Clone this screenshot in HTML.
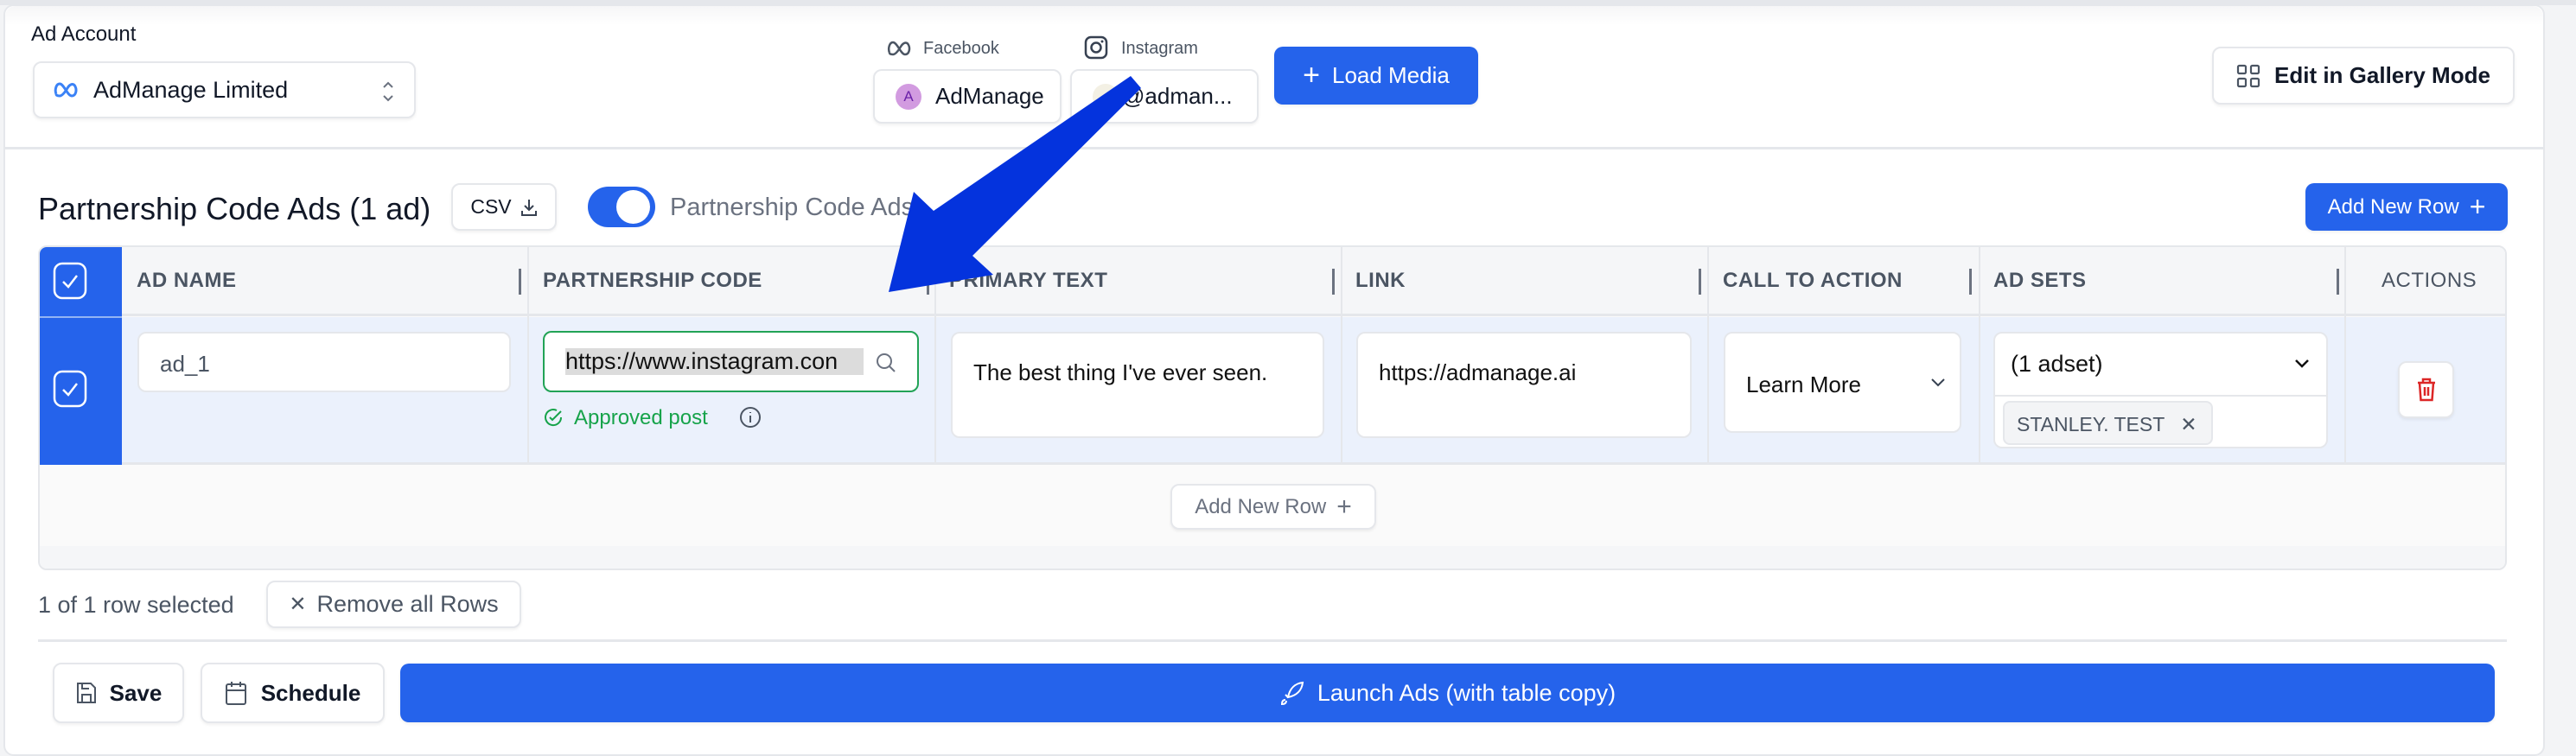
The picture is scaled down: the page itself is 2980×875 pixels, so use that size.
<!DOCTYPE html>
<html><head><meta charset="utf-8"><style>
*{box-sizing:border-box;margin:0;padding:0}
body{width:2980px;height:862px;position:relative;background:#f3f4f6;font-family:"Liberation Sans",sans-serif;overflow:hidden;color:#111827}
.a{position:absolute}
.btn{position:absolute;background:#fff;border:2px solid #e5e7eb;border-radius:10px;box-shadow:0 2px 3px rgba(0,0,0,.06);display:flex;align-items:center;font-size:26px}
.blue{background:#2563eb;color:#fff;border:none;border-radius:10px}
.hd{position:absolute;top:284px;height:81px;display:flex;align-items:center;font-size:24px;font-weight:bold;color:#4b5563;letter-spacing:.5px}
.sep{position:absolute;top:311px;width:3px;height:30px;background:#6b7280}
.vl{position:absolute;top:284px;height:253px;width:2px;background:#e5e7eb}
.inp{position:absolute;background:#fff;border:2px solid #e5e7eb;border-radius:10px;font-size:26px;color:#111}
</style></head><body>
<div class="a" style="left:0;top:0;width:2980px;height:6px;background:#e5e7eb"></div>
<div class="a" style="left:4px;top:5px;width:2940px;height:870px;background:#fff;border:2px solid #e5e7eb;border-radius:12px"></div>
<div class="a" style="left:6px;top:7px;width:2936px;height:22px;background:linear-gradient(#f6f6f7,#fff);border-radius:12px 12px 0 0"></div>
<div class="a" style="left:36px;top:26px;font-size:24px">Ad Account</div>
<div class="btn" style="left:38px;top:71px;width:443px;height:66px;padding-left:22px">
<svg width="30" height="20" viewBox="0 0 30 20"><path d="M3 15C1 10 3 3 7 3c5 0 9 14 14 14 5 0 6-7 4-11-2-4-6-3-9 2-3 5-6 9-9 9-3 0-4-1-4-2" fill="none" stroke="#3b82f6" stroke-width="3"/></svg>
<span style="margin-left:16px;font-size:27px">AdManage Limited</span>
<svg class="a" style="left:402px;top:20px" width="14" height="26" viewBox="0 0 14 26"><path d="M2 8 7 3l5 5M2 18l5 5 5-5" fill="none" stroke="#6b7280" stroke-width="2"/></svg></div>
<svg class="a" style="left:1026px;top:46px" width="30" height="20" viewBox="0 0 30 20"><path d="M3 15C1 10 3 3 7 3c5 0 9 14 14 14 5 0 6-7 4-11-2-4-6-3-9 2-3 5-6 9-9 9-3 0-4-1-4-2" fill="none" stroke="#4b5563" stroke-width="2.5"/></svg>
<div class="a" style="left:1068px;top:45px;font-size:20px;color:#4b5563">Facebook</div>
<svg class="a" style="left:1253px;top:40px" width="30" height="30" viewBox="0 0 30 30"><rect x="3" y="3" width="24" height="24" rx="6" fill="none" stroke="#374151" stroke-width="2.5"/><circle cx="15" cy="15" r="5.5" fill="none" stroke="#374151" stroke-width="2.5"/><circle cx="22" cy="8" r="1.5" fill="#374151"/></svg>
<div class="a" style="left:1297px;top:45px;font-size:20px;color:#4b5563">Instagram</div>
<div class="btn" style="left:1010px;top:80px;width:218px;height:63px;padding-left:24px"><span style="width:30px;height:30px;border-radius:50%;background:#d29be0;color:#6b21a8;font-size:17px;display:flex;align-items:center;justify-content:center">A</span><span style="margin-left:16px">AdManage</span></div>
<div class="btn" style="left:1238px;top:80px;width:218px;height:63px;padding-left:24px"><span style="width:30px;height:30px;border-radius:50%;background:#f3f0e4"></span><span style="margin-left:4px">@adman...</span></div>
<div class="btn blue" style="left:1474px;top:54px;width:236px;height:67px;justify-content:center;font-size:26px"><span style="font-size:34px;margin-right:14px;font-weight:300">+</span>Load Media</div>
<div class="btn" style="left:2559px;top:54px;width:350px;height:67px;padding-left:26px;font-weight:bold"><svg width="28" height="28" viewBox="0 0 28 28" fill="none" stroke="#4b5563" stroke-width="2.2"><rect x="2" y="2" width="9" height="9" rx="1.5"/><rect x="17" y="2" width="9" height="9" rx="1.5"/><rect x="2" y="17" width="9" height="9" rx="1.5"/><rect x="17" y="17" width="9" height="9" rx="1.5"/></svg><span style="margin-left:16px">Edit in Gallery Mode</span></div>
<div class="a" style="left:6px;top:170px;width:2936px;height:3px;background:#e5e7eb"></div>
<div class="a" style="left:44px;top:221px;font-size:36px">Partnership Code Ads (1 ad)</div>
<div class="btn" style="left:522px;top:212px;width:122px;height:55px;justify-content:center;font-size:23px">CSV <svg style="margin-left:10px" width="20" height="22" viewBox="0 0 20 22" fill="none" stroke="#374151" stroke-width="2"><path d="M10 2v12M5 9l5 5 5-5M2 15v5h16v-5"/></svg></div>
<div class="a" style="left:680px;top:216px;width:78px;height:47px;border-radius:24px;background:#2563eb"><div class="a" style="left:33px;top:4px;width:39px;height:39px;border-radius:50%;background:#fff"></div></div>
<div class="a" style="left:775px;top:224px;font-size:29px;color:#6b7280">Partnership Code Ads</div>
<div class="btn blue" style="left:2667px;top:212px;width:234px;height:55px;justify-content:center;font-size:24px">Add New Row <span style="font-size:32px;margin-left:12px;font-weight:300">+</span></div>
<div class="a" style="left:44px;top:284px;width:2856px;height:376px;border:2px solid #e5e7eb;border-radius:10px;background:#fafafa;overflow:hidden">
<div class="a" style="left:0;top:0;width:2856px;height:80px;background:#f5f6f8;border-bottom:3px solid #e5e7eb"></div>
<div class="a" style="left:0;top:81px;width:2856px;height:171px;background:#ebf1fc;border-bottom:3px solid #e5e7eb"></div>
<div class="a" style="left:0;top:0;width:95px;height:252px;background:#2563eb"></div>
<div class="a" style="left:0;top:80px;width:95px;height:2px;background:#93b4f4"></div>
<div class="a" style="left:0;top:272px;width:2856px;height:80px;background:#fafafa"></div>
<div class="a" style="left:0;top:346px;width:2856px;height:30px;background:#f5f6f8"></div>
</div>
<svg class="a" style="left:61px;top:303px" width="40" height="44" viewBox="0 0 40 44"><rect x="2" y="2" width="36" height="40" rx="9" fill="none" stroke="#fff" stroke-width="2.5"/><path d="M12 23l6 6 10-13" fill="none" stroke="#fff" stroke-width="2.5"/></svg>
<svg class="a" style="left:61px;top:428px" width="40" height="44" viewBox="0 0 40 44"><rect x="2" y="2" width="36" height="40" rx="9" fill="none" stroke="#fff" stroke-width="2.5"/><path d="M12 23l6 6 10-13" fill="none" stroke="#fff" stroke-width="2.5"/></svg>
<div class="vl" style="left:610px"></div><div class="vl" style="left:1081px"></div><div class="vl" style="left:1551px"></div><div class="vl" style="left:1975px"></div><div class="vl" style="left:2289px"></div><div class="vl" style="left:2712px"></div>
<div class="hd" style="left:158px">AD NAME</div>
<div class="hd" style="left:628px">PARTNERSHIP CODE</div>
<div class="hd" style="left:1098px">PRIMARY TEXT</div>
<div class="hd" style="left:1568px">LINK</div>
<div class="hd" style="left:1993px">CALL TO ACTION</div>
<div class="hd" style="left:2306px">AD SETS</div>
<div class="hd" style="left:2755px;font-weight:normal">ACTIONS</div>
<div class="sep" style="left:600px"></div><div class="sep" style="left:1072px"></div><div class="sep" style="left:1541px"></div><div class="sep" style="left:1965px"></div><div class="sep" style="left:2278px"></div><div class="sep" style="left:2703px"></div>
<div class="inp" style="left:159px;top:384px;width:432px;height:70px;padding:20px 24px;color:#4b5563">ad_1</div>
<div class="inp" style="left:628px;top:383px;width:435px;height:71px;border-color:#22a356;padding:18px 24px;overflow:hidden"><span style="background:#dcdcdc;display:inline-block;width:345px;overflow:hidden;white-space:nowrap;font-size:27px">https://www.instagram.con</span>
<svg class="a" style="left:382px;top:22px" width="26" height="26" viewBox="0 0 26 26" fill="none" stroke="#6b7280" stroke-width="2"><circle cx="11" cy="11" r="8"/><path d="M17 17l6 6"/></svg></div>
<svg class="a" style="left:628px;top:471px" width="24" height="24" viewBox="0 0 24 24" fill="none" stroke="#16a34a" stroke-width="2"><path d="M21 12a9 9 0 1 1-5-8"/><path d="M8 12l3 3 10-10"/></svg>
<div class="a" style="left:664px;top:470px;font-size:24px;color:#16a34a">Approved post</div>
<svg class="a" style="left:855px;top:470px" width="26" height="26" viewBox="0 0 26 26" fill="none" stroke="#4b5563" stroke-width="2"><circle cx="13" cy="13" r="11"/><path d="M13 11v8M13 7v1"/></svg>
<div class="inp" style="left:1100px;top:384px;width:432px;height:123px;padding:30px 24px">The best thing I've ever seen.</div>
<div class="inp" style="left:1569px;top:384px;width:388px;height:123px;padding:30px 24px">https://admanage.ai</div>
<div class="inp" style="left:1994px;top:384px;width:275px;height:117px;padding:44px 24px">Learn More<svg class="a" style="left:236px;top:50px" width="20" height="14" viewBox="0 0 20 14"><path d="M3 3l7 7 7-7" fill="none" stroke="#374151" stroke-width="2"/></svg></div>
<div class="inp" style="left:2306px;top:384px;width:387px;height:135px;overflow:hidden"><div style="padding:20px 18px;height:73px;border-bottom:2px solid #e5e7eb;font-size:27px">(1 adset)</div>
<svg class="a" style="left:345px;top:28px" width="20" height="14" viewBox="0 0 20 14"><path d="M3 3l7 7 7-7" fill="none" stroke="#111" stroke-width="2.5"/></svg>
<div class="a" style="left:9px;top:78px;width:243px;height:51px;background:#f3f4f6;border:2px solid #e5e7eb;border-radius:8px;padding:12px 14px;font-size:23px;color:#4b5563">STANLEY. TEST <span style="margin-left:12px">✕</span></div></div>
<div class="btn" style="left:2774px;top:418px;width:65px;height:66px;justify-content:center"><svg width="26" height="30" viewBox="0 0 26 30" fill="none" stroke="#dc2626" stroke-width="2.5"><path d="M3 7h20M9 7V3h8v4M5 7l1.5 20h13L21 7M11 12v10M15 12v10"/></svg></div>
<div class="btn" style="left:1354px;top:560px;width:238px;height:53px;justify-content:center;font-size:24px;color:#6b7280">Add New Row <span style="font-size:30px;margin-left:12px;font-weight:300">+</span></div>
<div class="a" style="left:44px;top:685px;font-size:27px;color:#4b5563">1 of 1 row selected</div>
<div class="btn" style="left:308px;top:672px;width:295px;height:55px;justify-content:center;color:#4b5563;font-size:27px"><span style="margin-right:12px;font-size:24px">✕</span>Remove all Rows</div>
<div class="a" style="left:44px;top:740px;width:2856px;height:3px;background:#e5e7eb"></div>
<div class="btn" style="left:61px;top:767px;width:152px;height:70px;justify-content:center;font-weight:bold"><svg style="margin-right:14px" width="26" height="28" viewBox="0 0 26 28" fill="none" stroke="#4b5563" stroke-width="2"><path d="M3 3h15l5 5v17H3z M8 25v-9h10v9M8 3v6h8"/></svg>Save</div>
<div class="btn" style="left:232px;top:767px;width:213px;height:70px;justify-content:center;font-weight:bold"><svg style="margin-right:16px" width="26" height="30" viewBox="0 0 26 30" fill="none" stroke="#4b5563" stroke-width="2"><rect x="2" y="5" width="22" height="23" rx="2"/><path d="M2 12h22M8 2v6M18 2v6"/></svg>Schedule</div>
<div class="btn blue" style="left:463px;top:768px;width:2423px;height:68px;justify-content:center;font-size:27px"><svg style="margin-right:14px" width="30" height="30" viewBox="0 0 30 30" fill="none" stroke="#fff" stroke-width="2"><path d="M10 20C12 10 18 4 27 3c-1 9-7 15-17 17zM10 20l-3-3M7 23c-3 0-4 2-4 5 3 0 5-1 5-4"/></svg>Launch Ads (with table copy)</div>
<svg class="a" style="left:0;top:0" width="2980" height="862"><path d="M1308 88 L1320 102 L1125 296 L1149 318 L1028 338 L1057 222 L1080 244 Z" fill="#0433dd"/></svg>
</body></html>
